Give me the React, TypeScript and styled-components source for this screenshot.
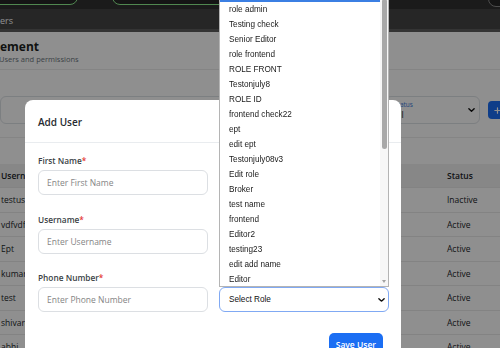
import React from 'react';
import styled, { createGlobalStyle } from 'styled-components';

const GlobalStyle = createGlobalStyle`
  html, body {
    margin: 0;
    padding: 0;
    overflow: hidden;
  }
  body {
    width: 500px;
    height: 348px;
    background: #fff;
    font-family: "Open Sans", "Noto Sans", sans-serif;
    color: #212529;
  }
`;

const roles = [
  'Select Role',
  'role admin',
  'Testing check',
  'Senior Editor',
  'role frontend',
  'ROLE FRONT',
  'Testonjuly8',
  'ROLE ID',
  'frontend check22',
  'ept',
  'edit ept',
  'Testonjuly08v3',
  'Edit role',
  'Broker',
  'test name',
  'frontend',
  'Editor2',
  'testing23',
  'edit add name',
  'Editor',
  'Manager',
];

const users = [
  { username: 'testuser', status: 'Inactive' },
  { username: 'vdfvdfvdf', status: 'Active' },
  { username: 'Ept', status: 'Active' },
  { username: 'kumar', status: 'Active' },
  { username: 'test', status: 'Active' },
  { username: 'shivarchana', status: 'Active' },
  { username: 'abhi', status: 'Active' },
];

const Page = styled.div`
  width: 500px;
  height: 348px;
  overflow: hidden;
  background: #fff;
`;

const TopStrip = styled.div`
  height: 9px;
  box-sizing: border-box;
  padding-bottom: 4px;
  background: #303030;
  display: flex;
  align-items: flex-end;
  overflow: hidden;
`;

const StripBox = styled.div<{ $w: number; $ml: number; $tone?: 'green' | 'gray' }>`
  flex: 0 0 auto;
  width: ${(p) => p.$w}px;
  height: 30px;
  margin-left: ${(p) => p.$ml}px;
  box-sizing: border-box;
  border: 1.5px solid ${(p) => (p.$tone === 'gray' ? '#8a8a8a' : '#8ff08f')};
  border-radius: 8px;
  background: #262626;
`;

const NavBar = styled.div`
  height: 23px;
  box-sizing: border-box;
  padding-top: 2px;
  background: #444;
  border-bottom: 3px solid #5e5e5e;
  display: flex;
  align-items: center;
`;

const NavItem = styled.span`
  font-size: 9px;
  color: #fff;
`;

const Header = styled.div`
  padding: 8px 0 5px;
  border-bottom: 1px solid #ececec;
`;

const Title = styled.div`
  font-size: 12px;
  line-height: 14px;
  font-weight: 700;
  color: #1d1f21;
`;

const Subtitle = styled.div`
  font-size: 7.5px;
  line-height: 10px;
  color: #6c757d;
  margin-left: -1px;
`;

const FilterRow = styled.div`
  display: flex;
  align-items: center;
  gap: 8px;
  padding: 26px 0 13px;
  border-bottom: 1px solid #eeeeee;
  overflow: hidden;
`;

const SearchBox = styled.div`
  flex: 0 0 377px;
  height: 28px;
  box-sizing: border-box;
  border: 1px solid #dee2e6;
  border-radius: 6px;
`;

const FloatSelect = styled.div`
  flex: 0 0 95px;
  height: 28px;
  box-sizing: border-box;
  border: 1px solid #dee2e6;
  border-radius: 6px;
  padding: 4px 0 0 8px;
  position: relative;
  display: flex;
  flex-direction: column;
`;

const FloatLabel = styled.span`
  font-size: 6.5px;
  line-height: 8px;
  color: #3d7bdb;
`;

const FloatValue = styled.span`
  font-size: 8.5px;
  line-height: 11px;
  color: #212529;
`;

const ChevronSlot = styled.span<{ $right: number }>`
  position: absolute;
  right: ${(p) => p.$right}px;
  top: 50%;
  transform: translateY(-50%);
  display: flex;
`;

const AddButton = styled.button`
  flex: 0 0 auto;
  height: 18px;
  border: none;
  border-radius: 4px;
  background: #1a6ef5;
  color: #fff;
  font-family: inherit;
  font-size: 8.5px;
  font-weight: 600;
  padding: 0 6px;
  display: flex;
  align-items: center;
  gap: 4px;
`;

const Table = styled.div`
  margin-top: 26px;
`;

const TableRow = styled.div<{ $head?: boolean }>`
  display: grid;
  grid-template-columns: 446px 1fr;
  align-items: center;
  height: ${(p) => (p.$head ? 24 : 24.5)}px;
  box-sizing: border-box;
  padding-left: 1px;
  background: ${(p) => (p.$head ? '#f1f1f1' : '#fff')};
  border-bottom: 1px solid #e9e9e9;
  font-size: 8.5px;
  font-weight: ${(p) => (p.$head ? 600 : 400)};
  white-space: nowrap;
  overflow: hidden;
`;

const Backdrop = styled.div`
  position: fixed;
  inset: 0;
  background: rgba(0, 0, 0, 0.44);
  display: flex;
  align-items: flex-start;
  padding: 100px 0 0 25px;
  overflow: hidden;
`;

const Modal = styled.div`
  width: 376px;
  flex: 0 0 auto;
  background: #fff;
  border-radius: 8px;
`;

const ModalHeader = styled.div`
  height: 43px;
  box-sizing: border-box;
  padding: 2px 13px 0;
  display: flex;
  align-items: center;
  border-bottom: 1px solid #e9ecef;
`;

const ModalTitle = styled.h5`
  margin: 0;
  font-size: 10px;
  font-weight: 600;
  color: #272b30;
`;

const ModalBody = styled.div`
  padding: 12px 12px 0 13px;
  display: grid;
  grid-template-columns: 1fr 1fr;
  column-gap: 11px;
  row-gap: 18.5px;
`;

const Field = styled.div`
  display: flex;
  flex-direction: column;
`;

const Label = styled.label`
  font-size: 8.3px;
  line-height: 12px;
  font-weight: 600;
  color: #3a3f45;
  margin-bottom: 3px;
`;

const Req = styled.span`
  color: #e53935;
`;

const Input = styled.input`
  height: 25px;
  box-sizing: border-box;
  border: 1px solid #dcdfe3;
  border-radius: 6px;
  padding: 0 8px;
  font-family: inherit;
  font-size: 8.5px;
  color: #212529;
  outline: none;
  &::placeholder {
    color: #858585;
  }
`;

const SelectWrap = styled.div`
  position: relative;
`;

const RoleSelect = styled.div`
  height: 25px;
  box-sizing: border-box;
  border: 1px solid #80a9f3;
  border-radius: 6px;
  padding: 0 9px;
  display: flex;
  align-items: center;
  font-family: "Liberation Sans", Arial, sans-serif;
  font-size: 8.2px;
  color: #111;
  position: relative;
`;

const Popup = styled.div`
  position: absolute;
  left: 0;
  right: 0;
  bottom: 100%;
  height: 301px;
  box-sizing: border-box;
  background: #fff;
  border: 1px solid #b4b4b4;
  display: flex;
  z-index: 5;
`;

const OptionList = styled.div`
  flex: 1;
  overflow: hidden;
`;

const Option = styled.div<{ $active?: boolean }>`
  height: 15px;
  line-height: 15px;
  padding-left: 9px;
  font-family: "Liberation Sans", Arial, sans-serif;
  font-size: 8.2px;
  color: ${(p) => (p.$active ? '#fff' : '#1a1a1a')};
  background: ${(p) => (p.$active ? '#3b7fe3' : 'transparent')};
  white-space: nowrap;
`;

const ScrollTrack = styled.div`
  flex: 0 0 8px;
  background: #f7f7f7;
  display: flex;
  flex-direction: column;
  align-items: center;
`;

const Thumb = styled.div`
  width: 5px;
  height: 150px;
  margin-top: 12px;
  border-radius: 3px;
  background: #a8a8a8;
`;

const Arrow = styled.div`
  margin-top: auto;
  margin-bottom: 3px;
  width: 0;
  height: 0;
  border-left: 2.5px solid transparent;
  border-right: 2.5px solid transparent;
  border-top: 3px solid #a3a3a3;
`;

const ModalFooter = styled.div`
  display: flex;
  justify-content: flex-end;
  padding: 21px 18px 12px;
`;

const SaveButton = styled.button`
  height: 22px;
  border: none;
  border-radius: 5px;
  background: #1b6ef3;
  color: #fff;
  font-family: inherit;
  font-size: 8.5px;
  font-weight: 600;
  padding: 0 7px;
`;

function Chevron({ size = 7 }: { size?: number }) {
  return (
    <svg width={size} height={size * 0.65} viewBox="0 0 8 5">
      <polyline points="1,1 4,4 7,1" fill="none" stroke="#111" strokeWidth="1.6" strokeLinecap="round" strokeLinejoin="round" />
    </svg>
  );
}

function Plus() {
  return (
    <svg width="7" height="7" viewBox="0 0 8 8">
      <path d="M4 1v6M1 4h6" stroke="#fff" strokeWidth="1.4" strokeLinecap="round" />
    </svg>
  );
}

export default function App() {
  return (
    <Page>
      <GlobalStyle />
      <TopStrip>
        <StripBox $w={90} $ml={-12} />
        <StripBox $w={230} $ml={34} />
        <StripBox $w={40} $ml={146} $tone="gray" style={{ marginBottom: -2 }} />
      </TopStrip>
      <NavBar>
        <NavItem>ers</NavItem>
      </NavBar>
      <Header>
        <Title>ement</Title>
        <Subtitle>Users and permissions</Subtitle>
      </Header>
      <FilterRow>
        <SearchBox />
        <FloatSelect>
          <FloatLabel>Status</FloatLabel>
          <FloatValue>All</FloatValue>
          <ChevronSlot $right={4}>
            <Chevron />
          </ChevronSlot>
        </FloatSelect>
        <AddButton>
          <Plus />
          Add User
        </AddButton>
      </FilterRow>
      <Table>
        <TableRow $head>
          <span>Username</span>
          <span>Status</span>
        </TableRow>
        {users.map((u) => (
          <TableRow key={u.username}>
            <span>{u.username}</span>
            <span>{u.status}</span>
          </TableRow>
        ))}
      </Table>

      <Backdrop>
        <Modal>
          <ModalHeader>
            <ModalTitle>Add User</ModalTitle>
          </ModalHeader>
          <ModalBody>
            <Field>
              <Label>
                First Name<Req>*</Req>
              </Label>
              <Input placeholder="Enter First Name" />
            </Field>
            <Field>
              <Label>
                Last Name<Req>*</Req>
              </Label>
              <Input placeholder="Enter Last Name" />
            </Field>
            <Field>
              <Label>
                Username<Req>*</Req>
              </Label>
              <Input placeholder="Enter Username" />
            </Field>
            <Field>
              <Label>
                Email<Req>*</Req>
              </Label>
              <Input placeholder="Enter Email" />
            </Field>
            <Field>
              <Label>
                Phone Number<Req>*</Req>
              </Label>
              <Input placeholder="Enter Phone Number" />
            </Field>
            <Field>
              <Label>
                Role<Req>*</Req>
              </Label>
              <SelectWrap>
                <Popup>
                  <OptionList>
                    {roles.map((r, i) => (
                      <Option key={r} $active={i === 0}>
                        {r}
                      </Option>
                    ))}
                  </OptionList>
                  <ScrollTrack>
                    <Thumb />
                    <Arrow />
                  </ScrollTrack>
                </Popup>
                <RoleSelect>
                  Select Role
                  <ChevronSlot $right={3}>
                    <Chevron />
                  </ChevronSlot>
                </RoleSelect>
              </SelectWrap>
            </Field>
          </ModalBody>
          <ModalFooter>
            <SaveButton>Save User</SaveButton>
          </ModalFooter>
        </Modal>
      </Backdrop>
    </Page>
  );
}
